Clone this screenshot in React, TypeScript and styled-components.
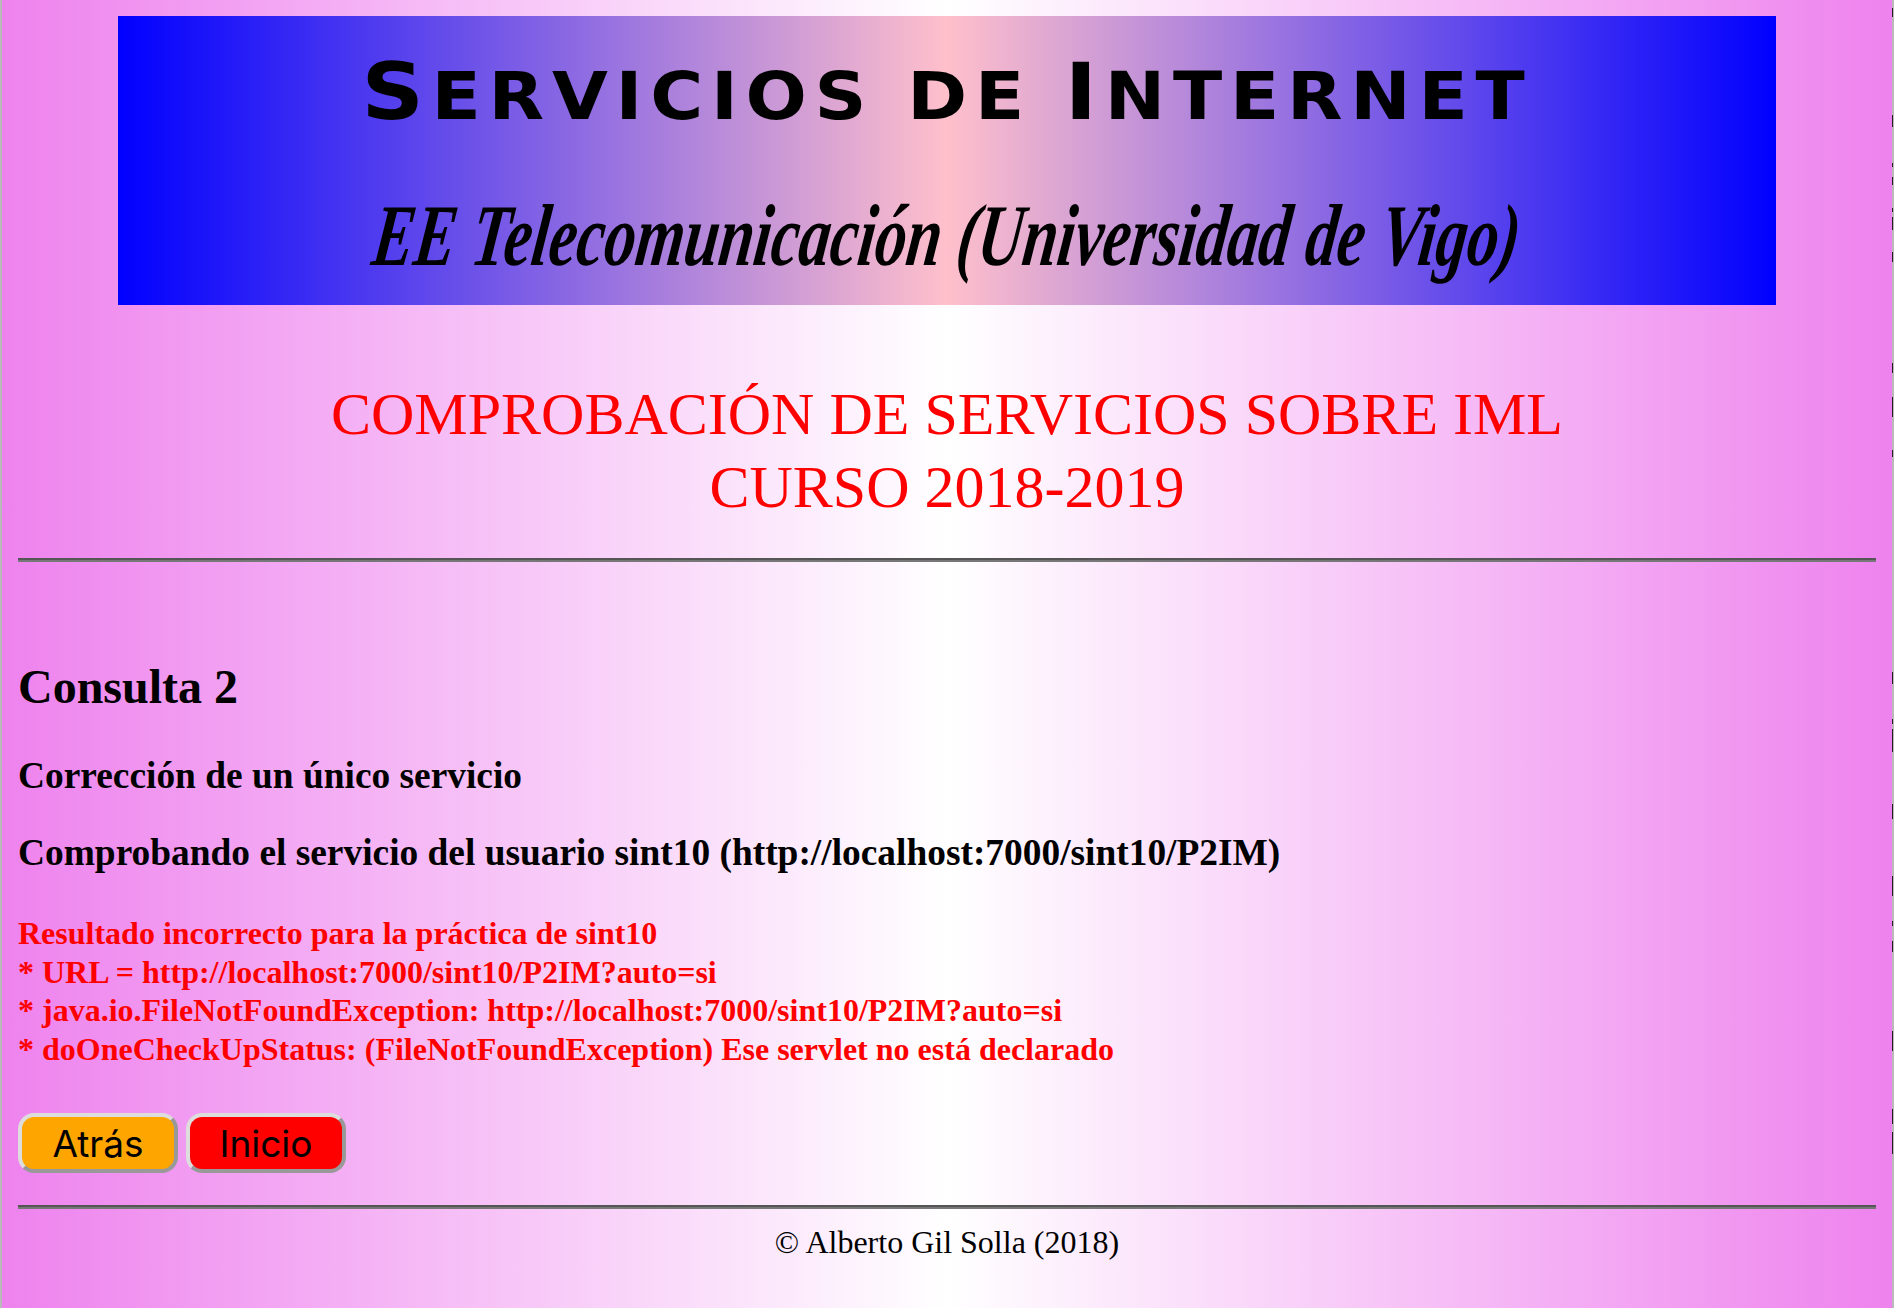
import React from "react";
import styled, { createGlobalStyle } from "styled-components";

// black specks along the right edge of the shot: [from, to] in page pixels
const EDGE_MARKS: [number, number][] = [
  [8, 17], [115, 127], [163, 167], [177, 185], [208, 212], [217, 230], [252, 262],
  [363, 373], [397, 417], [450, 457], [672, 684], [719, 724], [729, 752], [804, 819],
  [876, 896], [921, 926], [941, 952], [1031, 1051], [1109, 1124], [1132, 1154],
];

const edgeGradient = `linear-gradient(to bottom, ${EDGE_MARKS.map(
  ([a, b]) => `transparent ${a}px, #222 ${a}px, #222 ${b}px, transparent ${b}px`
).join(", ")})`;

const GlobalStyle = createGlobalStyle`
  html, body {
    margin: 0;
    padding: 0;
  }
  body {
    height: 1308px;
    overflow: hidden;
    font-family: "Liberation Serif", "Times New Roman", serif;
    color: #000;
    background: linear-gradient(to right, #ee82ee, #fff 50%, #ee82ee);
  }
`;

const Page = styled.div`
  position: relative;
  box-sizing: border-box;
  height: 1308px;
  padding: 16px 16px 0;
  border-left: 2px solid #b9b9b9;
  border-right: 2px solid #b9b9b9;
`;

const EdgeMarks = styled.div`
  position: absolute;
  top: 0;
  right: -1px;
  width: 1px;
  height: 1308px;
`;

const Banner = styled.header`
  box-sizing: border-box;
  width: 1658px;
  height: 289px;
  margin: 0 auto;
  padding-top: 34px;
  overflow: hidden;
  text-align: center;
  background: linear-gradient(to right, #00f, #ffc0cb 50%, #00f);
`;

const BannerTitle = styled.div`
  font-family: "DejaVu Sans", sans-serif;
  font-weight: bold;
  font-size: 65px;
  line-height: 84px;
  letter-spacing: 7px;
  text-transform: uppercase;
  white-space: nowrap;
  transform: scaleX(1.11);
`;

const BigCap = styled.span`
  font-size: 78px;
`;

const BannerSubtitle = styled.div`
  margin-top: 52px;
  font-style: italic;
  font-weight: bold;
  font-size: 88px;
  line-height: 90px;
  white-space: nowrap;
  transform: scaleX(0.71) skewX(-10deg);
`;

const Title = styled.h1`
  margin: 73px 0 0;
  font-weight: normal;
  font-size: 60px;
  line-height: 73px;
  text-align: center;
  color: #f00;
`;

const Rule = styled.hr`
  box-sizing: border-box;
  height: 4px;
  margin: 0;
  border: 0;
  border-top: 2px solid #555;
  border-bottom: 2px solid #777;
`;

const TopRule = styled(Rule)`
  margin-top: 34px;
`;

const Heading = styled.h2`
  margin: 100px 0 0;
  font-size: 48px;
  line-height: 50px;
`;

const SubHeading = styled.h3`
  margin: 44px 0 0;
  font-size: 37.4px;
  line-height: 40px;
`;

const SubHeadingNext = styled(SubHeading)`
  margin-top: 37px;
`;

const ErrorBlock = styled.div`
  margin-top: 41px;
  font-weight: bold;
  font-size: 32px;
  line-height: 38.5px;
  color: #f00;
`;

const Buttons = styled.div`
  display: flex;
  gap: 8px;
  margin-top: 45px;
`;

const NavButton = styled.button<{ $bg: string }>`
  box-sizing: border-box;
  width: 160px;
  height: 60px;
  padding: 0;
  border: 4px solid;
  border-color: #ddd #999 #999 #ddd;
  border-radius: 16px;
  font-family: "Inter", "Liberation Sans", Arial, sans-serif;
  font-size: 37px;
  color: #000;
  background: ${(p) => p.$bg};
`;

const BottomRule = styled(Rule)`
  margin-top: 32px;
`;

const Footer = styled.div`
  margin-top: 15px;
  font-size: 32px;
  line-height: 36px;
  text-align: center;
`;

export default function App() {
  return (
    <>
      <GlobalStyle />
      <Page>
        <EdgeMarks style={{ backgroundImage: edgeGradient }} />
        <Banner>
          <BannerTitle>
            <BigCap>S</BigCap>ervicios de <BigCap>I</BigCap>nternet
          </BannerTitle>
          <BannerSubtitle>EE Telecomunicación (Universidad de Vigo)</BannerSubtitle>
        </Banner>
        <Title>
          COMPROBACIÓN DE SERVICIOS SOBRE IML
          <br />
          CURSO 2018-2019
        </Title>
        <TopRule />
        <Heading>Consulta 2</Heading>
        <SubHeading>Corrección de un único servicio</SubHeading>
        <SubHeadingNext>Comprobando el servicio del usuario sint10 (http://localhost:7000/sint10/P2IM)</SubHeadingNext>
        <ErrorBlock>
          Resultado incorrecto para la práctica de sint10
          <br />* URL = http://localhost:7000/sint10/P2IM?auto=si
          <br />* java.io.FileNotFoundException: http://localhost:7000/sint10/P2IM?auto=si
          <br />* doOneCheckUpStatus: (FileNotFoundException) Ese servlet no está declarado
        </ErrorBlock>
        <Buttons>
          <NavButton $bg="#ffa500">Atrás</NavButton>
          <NavButton $bg="#f00">Inicio</NavButton>
        </Buttons>
        <BottomRule />
        <Footer>© Alberto Gil Solla (2018)</Footer>
      </Page>
    </>
  );
}
